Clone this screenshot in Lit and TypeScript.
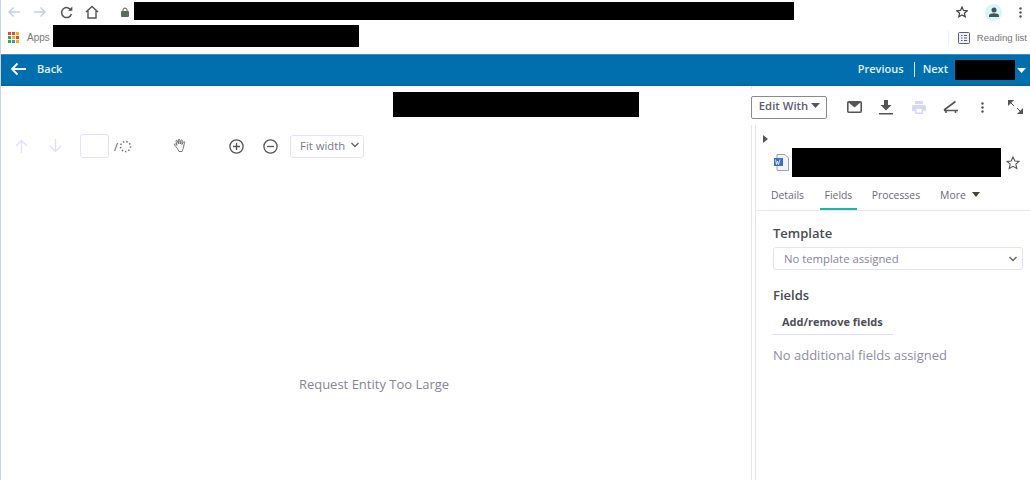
import { LitElement, html, css, svg } from "lit";
import { customElement } from "lit/decorators.js";

const icon = (w: number, h: number, body: unknown, cls = "") =>
  html`<svg class="ic ${cls}" width=${w} height=${h} viewBox="0 0 ${w} ${h}">${body}</svg>`;

@customElement("app-root")
export class AppRoot extends LitElement {
  static styles = css`
    :host { display: block; width: 1030px; height: 480px; overflow: hidden; background: #fff; font-family: "Open Sans", sans-serif; color: #6f6b85; box-sizing: border-box; border-left: 1px solid #c9d3ee; }
    .ic { display: block; flex: none; }
    .black { background: #000; flex: none; }
    .addr { display: flex; align-items: center; height: 23px; padding-bottom: 1px; box-sizing: border-box; }
    .addr .ic, .addr .avatar { margin-top: 2px; }
    .addr .avatar .ic { margin-top: 0; }
    .addr .back { margin-left: 6px; }
    .addr .fwd { margin-left: 12px; }
    .addr .reload { margin-left: 13px; }
    .addr .home { margin-left: 12px; }
    .addr .lock { margin-left: 22px; }
    .addr .url { width: 660px; height: 18px; margin-left: 5px; }
    .addr .star { margin-left: 162px; }
    .addr .avatar { margin-left: 17px; width: 17px; height: 17px; border-radius: 50%; background: #d8f5f7; display: flex; align-items: center; justify-content: center; }
    .addr .dots { margin-left: 17px; }
    .marks { display: flex; align-items: center; height: 31px; padding-bottom: 5px; box-sizing: border-box; font-family: "Liberation Sans", sans-serif; font-size: 9.6px; color: #777; }
    .marks .grid { margin: 2px 0 0 7px; }
    .marks .apps { margin: 3px 0 0 8px; width: 26px; font-size: 10px; }
    .marks .bm { width: 306px; height: 22px; margin-left: 0; }
    .marks .rl { margin: 3px 0 0 auto; display: flex; align-items: center; gap: 7px; padding-right: 3px; border-left: 1px solid #eceef8; padding-left: 9px; height: 14px; }
    .bar { height: 32px; background: #016fae; border-top: 1px solid #3c8fc4; border-bottom: 2px solid #04689f; box-sizing: border-box; display: flex; align-items: center; color: #e0f1f8; font-size: 11px; font-weight: 600; }
    .bar span { margin-bottom: 2px; }
    .bar .arrow { margin: 0 0 1px 9px; }
    .bar .backt { margin-left: 10px; }
    .bar .prev { margin-left: auto; }
    .bar .sep { width: 1px; height: 15px; background: #cfe6f2; margin: 0 8px 1px 10px; }
    .bar .nx { width: 60px; height: 20px; margin-left: 7px; }
    .bar .caret { margin: 2px 4px 0 2px; }
    .main { display: grid; grid-template-columns: 751px 1fr; height: 395px; }
    .left { display: flex; flex-direction: column; border-right: 1px solid #e3e4f6; position: relative; }
    .title { height: 25px; width: 246px; margin: 6px 0 0 392px; }
    .tools { display: flex; align-items: center; height: 26px; margin-top: 16px; }
    .tools .up { margin-left: 14px; }
    .tools .down { margin-left: 21px; }
    .page { width: 29px; height: 24px; margin-left: 18px; border: 1px solid #e3e2fa; border-radius: 3px; box-sizing: border-box; }
    .slash { font-size: 11px; margin-left: 5px; color: #555; }
    .tools .spin { margin-left: 1px; }
    .tools .hand { margin-left: 41px; }
    .tools .plus { margin-left: 40px; }
    .tools .minus { margin-left: 19px; }
    .fit { width: 74px; height: 23px; margin-left: 12px; border: 1px solid #e3e2fa; border-radius: 3px; box-sizing: border-box; display: flex; align-items: center; justify-content: space-between; padding: 0 3px 2px 9px; font-size: 11.3px; color: #7b7890; }
    .msg { flex: 1; display: flex; align-items: center; justify-content: center; font-size: 13px; color: #86849a; padding: 128px 4px 0 0; }
    .right { display: flex; flex-direction: column; position: relative; min-width: 0; }
    .acts { display: flex; align-items: center; height: 36px; margin-left: -1px; background: #fff; margin-top: 3px; }
    .edit { width: 76px; height: 23px; border: 1px solid #8a8a8a; border-radius: 2px; box-sizing: border-box; display: flex; align-items: center; justify-content: center; gap: 3px; padding: 0 0 3px 1px; font-size: 11.3px; font-weight: 600; color: #5e5b70; }
    .acts .a1 { margin-left: 20px; }
    .acts .a2 { margin-left: 17px; }
    .acts .a3 { margin-left: 19px; }
    .acts .a4 { margin-left: 17px; }
    .acts .a5 { margin-left: 23px; }
    .acts .a6 { margin-left: 24px; }
    .panel { flex: 1; margin-left: 3px; border-left: 1px solid #e3e4f6; padding-left: 0; display: flex; flex-direction: column; }
    .panel .tri { margin: 10px 0 0 7px; }
    .fname { display: flex; align-items: center; height: 29px; margin-top: 5px; }
    .fname .doc { margin-left: 18px; }
    .fname .nm { width: 209px; height: 29px; margin-left: 3px; }
    .fname .st { margin-left: 5px; }
    .tabs { display: flex; height: 27px; margin-top: 6px; border-bottom: 1px solid #e8e8f8; font-size: 10.4px; color: #6b6880; box-sizing: content-box; }
    .tab { display: flex; align-items: center; height: 27px; box-sizing: border-box; padding: 0 5px 4px; }
    .tab.on { border-bottom: 2px solid #1ab5a8; padding: 0 4.5px 2px; }
    .t1 { margin-left: 10px; }
    .t2 { margin-left: 11px; }
    .t3 { margin-left: 10px; }
    .t4 { margin-left: 10px; gap: 6px; }
    .body { padding: 13px 7px 0 17px; display: flex; flex-direction: column; }
    .h { font-size: 13px; font-weight: 600; color: #4a4a4f; line-height: 19px; }
    .sel { height: 23px; margin-top: 4px; border: 1px solid #e3e2fa; border-radius: 3px; box-sizing: border-box; display: flex; align-items: center; justify-content: space-between; padding: 0 4px 0 10px; font-size: 11.3px; color: #85839a; }
    .fh { margin-top: 16px; }
    .add { width: 120px; height: 25px; margin-top: 4.5px; box-sizing: border-box; border-bottom: 1px solid #dcdcf4; display: flex; align-items: center; padding-left: 9px; font-size: 11px; font-weight: 700; color: #4d4d55; }
    .none { margin-top: 11.5px; font-size: 13px; line-height: 19px; color: #8f8da3; }
  `;

  render() {
    const chev = icon(10, 6, svg`<path d="M1.500 1l3.500 3.500L8.500 1" fill="none" stroke="#666" stroke-width="1.400"/>`);
    return html`
      <div class="addr">
        ${icon(14, 12, svg`<path d="M13 6H2M6.500 1.500L2 6l4.500 4.500" fill="none" stroke="#c5cdea" stroke-width="1.400"/>`, "back")}
        ${icon(14, 12, svg`<path d="M1 6h11M7.500 1.500L12 6l-4.500 4.500" fill="none" stroke="#c5cdea" stroke-width="1.400"/>`, "fwd")}
        ${icon(13, 13, svg`<path d="M11 4.200A5 5 0 1 0 11.400 8" fill="none" stroke="#555" stroke-width="1.500"/><path d="M8 4.700h4.300V.6z" fill="#555"/>`, "reload")}
        ${icon(14, 14, svg`<path d="M1 7l6-5.500L13 7M3 5.800V13h8V5.800" fill="none" stroke="#555" stroke-width="1.400"/>`, "home")}
        ${icon(8, 10, svg`<path d="M2 4V3a2 2 0 0 1 4 0v1" fill="none" stroke="#555"/><rect y="4" width="8" height="6" rx="1" fill="#5a6d5f"/>`, "lock")}
        <div class="black url"></div>
        ${icon(12, 12, svg`<path d="M6 1l1.500 3.400 3.700.4-2.800 2.400.8 3.600L6 9l-3.200 1.800.8-3.600L.8 4.800l3.700-.4z" fill="none" stroke="#444" stroke-width="1.200"/>`, "star")}
        <div class="avatar">${icon(10, 10, svg`<circle cx="5" cy="3" r="2.500" fill="#455"/><path d="M0 10V8.500C0 7 2.500 6.300 5 6.300s5 .7 5 2.200V10z" fill="#455"/>`)}</div>
        ${icon(3, 11, svg`<circle cx="1.500" cy="1.500" r="1.200" fill="#555"/><circle cx="1.500" cy="5.500" r="1.200" fill="#555"/><circle cx="1.500" cy="9.500" r="1.200" fill="#555"/>`, "dots")}
      </div>
      <div class="marks">
        ${icon(11, 11, svg`
          <rect width="3" height="3" fill="#e8453c"/><rect x="4" width="3" height="3" fill="#e8453c"/><rect x="8" width="3" height="3" fill="#f4b400"/>
          <rect y="4" width="3" height="3" fill="#34a853"/><rect x="4" y="4" width="3" height="3" fill="#f4b400"/><rect x="8" y="4" width="3" height="3" fill="#e8453c"/>
          <rect y="8" width="3" height="3" fill="#34a853"/><rect x="4" y="8" width="3" height="3" fill="#4285f4"/><rect x="8" y="8" width="3" height="3" fill="#f4b400"/>`, "grid")}
        <span class="apps">Apps</span>
        <div class="black bm"></div>
        <div class="rl">
          ${icon(12, 12, svg`<rect x=".5" y=".5" width="11" height="11" rx="1" fill="#eef0f8" stroke="#5a5f78"/><path d="M3 3.500h1.500M3 6h1.500M3 8.500h1.500M6 3.500h3M6 6h3M6 8.500h3" stroke="#5a5f78"/>`)}
          <span>Reading list</span>
        </div>
      </div>
      <div class="bar">
        ${icon(17, 14, svg`<path d="M16 7H2M7.500 1.500L2 7l5.500 5.500" fill="none" stroke="#fff" stroke-width="1.800"/>`, "arrow")}
        <span class="backt">Back</span>
        <span class="prev">Previous</span>
        <span class="sep"></span>
        <span>Next</span>
        <div class="black nx"></div>
        ${icon(9, 5, svg`<path d="M0 0h9L4.500 5z" fill="#fff"/>`, "caret")}
      </div>
      <div class="main">
        <div class="left">
          <div class="black title"></div>
          <div class="tools">
            ${icon(13, 14, svg`<path d="M6.500 14V1.500M1 7l5.500-5.500L12 7" fill="none" stroke="#dfe0fa" stroke-width="1.400"/>`, "up")}
            ${icon(13, 14, svg`<path d="M6.500 0v12.500M1 7l5.500 5.500L12 7" fill="none" stroke="#dfe0fa" stroke-width="1.400"/>`, "down")}
            <div class="page"></div>
            <span class="slash">/</span>
            ${icon(13, 13, svg`<circle cx="6.500" cy="6.500" r="5" fill="none" stroke="#666" stroke-width="1.500" stroke-dasharray="1.300 2.100"/>`, "spin")}
            ${icon(16, 16, svg`<path d="M4 10L1.500 7c-.6-.8.4-1.500 1-1L4 7.300 3 3.200c-.2-1 1-1.200 1.300-.3L5.600 6l-.3-4c0-1 1.300-1 1.400 0L7.300 6l.7-3.600c.2-.9 1.400-.7 1.300.2L8.900 6.500l1.600-2.600c.5-.7 1.400-.2 1.100.5L10.500 9c-.5 2-.8 3-1.500 4.500H6C5.200 12 4.800 11 4 10z" fill="#fff" stroke="#666" stroke-width=".9"/>`, "hand")}
            ${icon(15, 15, svg`<circle cx="7.500" cy="7.500" r="6.600" fill="none" stroke="#555" stroke-width="1.300"/><path d="M4 7.500h7M7.500 4v7" stroke="#555" stroke-width="1.300"/>`, "plus")}
            ${icon(15, 15, svg`<circle cx="7.500" cy="7.500" r="6.600" fill="none" stroke="#555" stroke-width="1.300"/><path d="M4 7.500h7" stroke="#555" stroke-width="1.300"/>`, "minus")}
            <div class="fit"><span>Fit width</span>${chev}</div>
          </div>
          <div class="msg">Request Entity Too Large</div>
        </div>
        <div class="right">
          <div class="acts">
            <div class="edit"><span>Edit With</span>${icon(9, 5, svg`<path d="M0 0h9L4.500 5z" fill="#555"/>`)}</div>
            ${icon(15, 12, svg`<rect x=".8" y=".8" width="13.400" height="10.400" rx="1" fill="none" stroke="#555" stroke-width="1.600"/><path d="M1 1h13L7.500 6.500z" fill="#555"/>`, "a1")}
            ${icon(14, 15, svg`<path d="M5 0h4v5h3.500L7 10.500 1.500 5H5zM0 13h14v1.600H0z" fill="#555"/>`, "a2")}
            ${icon(14, 13, svg`<path d="M3 0h8v3H3zM1.500 4h11A1.500 1.500 0 0 1 14 5.500V10h-3v3H3v-3H0V5.500A1.500 1.500 0 0 1 1.500 4z" fill="#d6d8f6"/><rect x="4.500" y="8" width="5" height="3.500" fill="#fff"/>`, "a3")}
            ${icon(15, 14, svg`<path d="M1 10L12.500 1.500M1 10.500H15M3 10.500v2.500M12.500 10.500v2.500" fill="none" stroke="#555" stroke-width="1.600"/>`, "a4")}
            ${icon(3, 11, svg`<circle cx="1.500" cy="1.500" r="1.200" fill="#555"/><circle cx="1.500" cy="5.500" r="1.200" fill="#555"/><circle cx="1.500" cy="9.500" r="1.200" fill="#555"/>`, "a5")}
            ${icon(15, 14, svg`<path d="M0 0h5.500L0 5.500zM2 2l4 4" fill="#555" stroke="#555"/><path d="M15 14H9.500L15 8.500zM13 12L9 8" fill="#555" stroke="#555"/>`, "a6")}
          </div>
          <div class="panel">
            ${icon(5, 8, svg`<path d="M0 0l5 4-5 4z" fill="#555"/>`, "tri")}
            <div class="fname">
              ${icon(15, 17, svg`<path d="M3 .5h8l3.500 3.500v12.500H3z" fill="#f2f3fa" stroke="#9aa0b8"/><rect y="4" width="9" height="8" fill="#3b6fc4"/><path d="M1.500 5.500l1 5 1-3.500 1 3.500 1.500-5" fill="none" stroke="#fff" stroke-width=".8"/>`, "doc")}
              <div class="black nm"></div>
              ${icon(14, 14, svg`<path d="M7 1l1.800 4 4.200.4-3.200 2.800 1 4.300L7 10.300l-3.800 2.200 1-4.300L1 5.400 5.200 5z" fill="none" stroke="#555" stroke-width="1.100"/>`, "st")}
            </div>
            <div class="tabs">
              <div class="tab t1">Details</div>
              <div class="tab t2 on">Fields</div>
              <div class="tab t3">Processes</div>
              <div class="tab t4">More ${icon(8, 5, svg`<path d="M0 0h8L4 5z" fill="#443"/>`)}</div>
            </div>
            <div class="body">
              <div class="h">Template</div>
              <div class="sel"><span>No template assigned</span>${chev}</div>
              <div class="h fh">Fields</div>
              <div class="add">Add/remove fields</div>
              <div class="none">No additional fields assigned</div>
            </div>
          </div>
        </div>
      </div>
    `;
  }
}
